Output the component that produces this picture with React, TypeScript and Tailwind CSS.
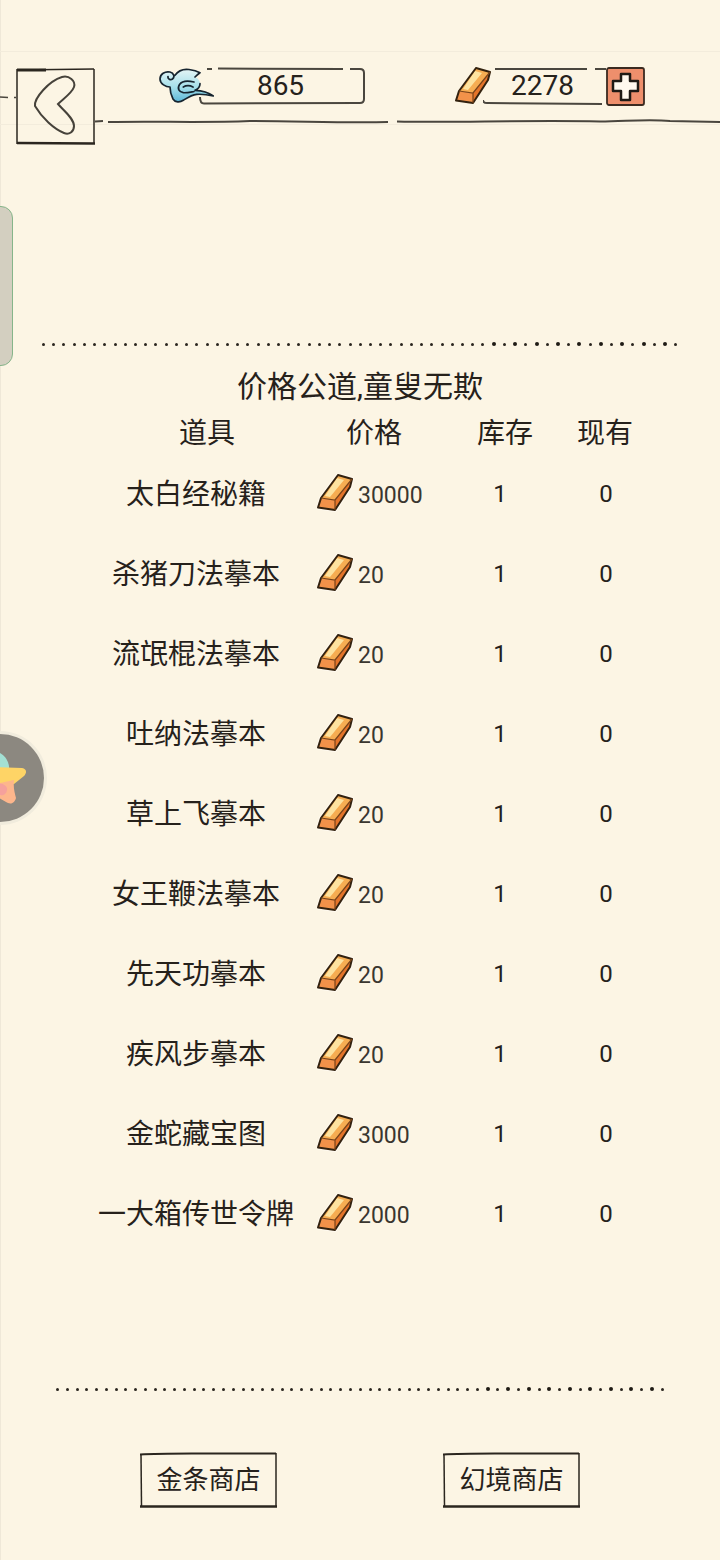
import React from "react";

const items = [
  { name: "太白经秘籍", price: 30000 },
  { name: "杀猪刀法摹本", price: 20 },
  { name: "流氓棍法摹本", price: 20 },
  { name: "吐纳法摹本", price: 20 },
  { name: "草上飞摹本", price: 20 },
  { name: "女王鞭法摹本", price: 20 },
  { name: "先天功摹本", price: 20 },
  { name: "疾风步摹本", price: 20 },
  { name: "金蛇藏宝图", price: 3000 },
  { name: "一大箱传世令牌", price: 2000 },
];

const GoldBar = ({ halo = false }: { halo?: boolean }) => (
  <svg width="38" height="38" viewBox="0 0 38 38" className="shrink-0">
    {halo && (
      <path
        d="M21 1 L35 5 L33 13 L18 36 L1 33.500 L4 24 Z"
        fill="#fffaf0"
        stroke="#fffaf0"
        strokeWidth="4"
        strokeLinejoin="round"
      />
    )}
    <path d="M21 1 L35 5 L18 26 L4 24 Z" fill="#f6ad52" />
    <path d="M20 4 L27 6 L13 23 L8 22 Z" fill="#fde3a0" />
    <path d="M35 5 L33 13 L18 36 L18 26 Z" fill="#e4742a" />
    <path d="M4 24 L18 26 L18 36 L1 33.500 Z" fill="#f2924a" />
    <path
      d="M21 1 L35 5 L33 13 L18 36 L1 33.500 L4 24 Z"
      fill="none"
      stroke="#33220f"
      strokeWidth="2"
      strokeLinejoin="round"
    />
    <path d="M4 24 L18 26 L35 5 M18 26 L18 36" fill="none" stroke="#7a4318" strokeWidth="1.200" />
  </svg>
);

const Cloud = () => (
  <svg width="56" height="36" viewBox="0 0 56 36" className="shrink-0">
    <defs>
      <linearGradient id="cloudFill" x1="0" y1="0" x2="0" y2="1">
        <stop offset="0" stopColor="#e4f5f6" />
        <stop offset="0.55" stopColor="#a5dfea" />
        <stop offset="1" stopColor="#5db8d8" />
      </linearGradient>
    </defs>
    <path
      d="M2 11 C2 6 7 3 12 4 C14 4.500 16 6 17 7.300 C20 3 25 0.700 31 1.500 C35 2 39 3 42 4.700 C40 6 38 8 37 9 C40 10 42 13 42 15.700 C42 19 40 21 37 22.300 C42 22.500 50 24 55.300 28 C49 26.500 44 26 38.700 26.300 C33 27 29 30 25.300 32.300 C22 34.500 17 34.500 15 31 C13 27 12 23 12 19 C8 19 2 16 2 11 Z"
      fill="url(#cloudFill)"
    />
    <path
      d="M12 19 C8 19 2 16 2 11 C2 6 7 3 12 4 C16 5 17 9 14.500 11 C12.500 12.500 9.500 11 10 8.500 M17 7.300 C20 3 25 0.700 31 1.500 C35 2 39 3 42 4.700 C40 6 38 8 37 9 M12 19 C12 24 13 27 15 31 C17 34.500 22 34.500 25.300 32.300 C29 30 33 27 38.700 26.300 C44 26 49 26.500 55.300 28 C50 24 42 22.500 37 22.300 C40 21 42 19 42 15.700"
      fill="none"
      stroke="#16242f"
      strokeWidth="1.700"
      strokeLinecap="round"
      strokeLinejoin="round"
    />
    <path
      d="M36 14 C30 12.500 24 13 21.500 16.500 C19 20.500 21 24 25.300 24.700 C29 25 33 24 36 23.500 M25.300 19 C28 17.500 32 17.500 35 19"
      fill="none"
      stroke="#16242f"
      strokeWidth="1.700"
      strokeLinecap="round"
    />
  </svg>
);

const HandFrame = () => (
  <svg
    className="absolute inset-0 h-full w-full"
    viewBox="0 0 137 56"
    preserveAspectRatio="none"
    fill="none"
    stroke="#2b261f"
  >
    <path d="M0 2.500 C30 0.500 60 2 136 1.500" strokeWidth="2" />
    <path d="M1 2 L1.500 54" strokeWidth="1.500" />
    <path d="M136 1 L136 54" strokeWidth="1.500" />
    <path d="M0 54.500 L137 54.500" strokeWidth="2.500" />
  </svg>
);

// dots get a bit heavier towards the right end, like the drawn line
const Dots = ({ count }: { count: number }) => (
  <div className="flex items-center justify-between">
    {Array.from({ length: count }).map((_, i) => (
      <span
        key={i}
        className={
          i > count * 0.7 && i % 2 === 0
            ? "h-[4px] w-[4px] rounded-full bg-[#1f1b15]"
            : "h-[3px] w-[3px] rounded-full bg-[#2b261f]"
        }
      />
    ))}
  </div>
);

const App = () => {
  return (
    <div className="relative h-[1560px] w-[720px] overflow-hidden bg-[#fcf5e4] font-['Roboto','Noto_Sans_CJK_SC',sans-serif] text-[#26211b]">
      <div className="absolute bottom-0 left-0 top-0 w-px bg-[#efe8d8]" />

      {/* left drawer handle */}
      <div className="absolute left-[-12px] top-[206px] h-[160px] w-[25px] rounded-[12px] border border-[#86b58a] bg-[#d3cfc0]" />

      {/* floating ball */}
      <svg width="50" height="96" viewBox="0 0 50 96" className="absolute left-0 top-[730px]">
        <circle cx="0" cy="48" r="47" fill="#f1ecdd" />
        <circle cx="0" cy="48" r="44" fill="#8c8880" />
        <path d="M-8 42 L0 23 C6 26 10 34 9 40 Z" fill="#a3e0d4" />
        <path d="M-8 37 L22 38 C27 39 27 43 24 46 L14 54 L-8 60 Z" fill="#fed466" />
        <path d="M-4 54 L14 50 C13 58 15 64 16 68 C14 75 9 74 6 72 L-4 66 Z" fill="#fdb68c" />
        <path d="M-4 54 C2 52 8 56 7 60 C6 66 1 66 -4 64 Z" fill="#f5a19c" />
      </svg>

      <div className="h-[51px]" />

      {/* top bar */}
      <header className="relative h-[74px] border-y border-[#f3ecdc]">
        <svg width="720" height="40" viewBox="0 0 720 40" fill="none" stroke="#4a463e" className="absolute left-0 top-[36px]">
          <path d="M0 9 L8 9.500 M14 9.500 L16 9.500" strokeWidth="1.500" />
          <path
            d="M95 33.500 L103 33 M108 34 C160 33 200 35 250 33 C300 33 340 35 388 34 M397 33.500 C450 35 520 32 600 33.500 C630 33 650 31 670 33 L720 34"
            strokeWidth="2"
          />
        </svg>

        <div className="flex items-start pl-[16px] pt-[16px]">
          <button className="relative z-10 h-[77px] w-[79px] shrink-0">
            <svg width="79" height="77" viewBox="0 0 79 77" fill="none" stroke="#2b261f" className="absolute inset-0">
              <path d="M1 2 L78 1" strokeWidth="1.500" />
              <path d="M1 2 L30 2" strokeWidth="3" />
              <path d="M1 1 L1 76" strokeWidth="1.500" />
              <path d="M78 1 L78 75" strokeWidth="1.500" />
              <path d="M1 75 L79 75.500" strokeWidth="2.500" />
              <path
                d="M46 9 C53 7 60 13 58 19 C56 25 47 31 42 36 C47 42 58 50 58 58 C58 64 53 67 48 65 C38 61 26 50 19 38 C18 30 33 13 46 9 Z"
                stroke="#46423a"
                strokeWidth="2"
              />
            </svg>
          </button>

          <div className="relative ml-[63px] mt-[-1px] flex h-[38px] w-[207px] shrink-0 items-center">
            <div className="absolute left-[40px] top-0 flex h-[38px] w-[167px] items-center justify-center pr-[2px] text-[28px] leading-none text-[#26221c]">
              <svg width="167" height="38" viewBox="0 0 167 38" fill="none" stroke="#4a463e" strokeWidth="2" className="absolute inset-0">
                <path d="M9 2 L14 2 M20 1.500 L145 2 M152 2 L162 2 C165 2 166 4 166 6 L166 32 C166 35 165 36 162 36 L6 36.500 C3 36.500 2 34 2 30" />
              </svg>
              865
            </div>
            <div className="relative z-10">
              <Cloud />
            </div>
          </div>

          <div className="ml-[90px] mt-[-1px] flex h-[38px] shrink-0 items-center">
            <div className="relative z-10 -mr-[10px]">
              <GoldBar />
            </div>
            <div className="relative flex h-[38px] w-[123px] items-center justify-center pr-[4px] text-[28px] leading-none text-[#26221c]">
              <svg width="123" height="38" viewBox="0 0 123 38" fill="none" stroke="#4a463e" strokeWidth="2" className="absolute inset-0">
                <path d="M12 2 L104 2 M112 2 L123 2 M0 33 C0 35 2 36 4 36 L119 37" />
              </svg>
              2278
            </div>
            <svg width="39" height="39" viewBox="0 0 39 39" className="shrink-0">
              <rect x="1" y="1" width="37" height="37" rx="2" fill="#ee8f6c" stroke="#3b2a20" strokeWidth="1.800" />
              <path
                d="M15 7 L24 7 L24 14 L32 14 L32 24 L24 24 L24 33 L15 33 L15 24 L7 24 L7 14 L15 14 Z"
                fill="#fff8ee"
                stroke="#1f1a15"
                strokeWidth="2.500"
                strokeLinejoin="round"
              />
            </svg>
          </div>
        </div>
      </header>

      <main className="px-[42px] pt-[217px]">
        <div className="w-[636px]">
          <Dots count={62} />
        </div>

        <h1 className="mt-[19px] h-[44px] w-[636px] text-center text-[30px] font-normal leading-[44px]">
          价格公道,童叟无欺
        </h1>

        <div className="mt-[3px] grid h-[43px] grid-cols-[174px_160px_102px_98px] pl-[78px] text-center text-[28px] leading-[43px]">
          <span>道具</span>
          <span>价格</span>
          <span>库存</span>
          <span>现有</span>
        </div>

        <div className="flex flex-col">
          {items.map((item) => (
            <div key={item.name} className="flex h-[80px] items-center pl-[34px]">
              <span className="w-[240px] whitespace-nowrap text-center text-[28px] leading-none">
                {item.name}
              </span>
              <div className="ml-[1px] flex w-[123px] shrink-0 items-center gap-[3px]">
                <div className="mb-[5px]">
                  <GoldBar halo />
                </div>
                <span className="text-[23px] leading-none text-[#3a362f]">{item.price}</span>
              </div>
              <span className="mb-[2px] w-[120px] text-center text-[24px] leading-none">1</span>
              <span className="mb-[2px] w-[92px] text-center text-[24px] leading-none">0</span>
            </div>
          ))}
        </div>
      </main>

      <div className="absolute left-[56px] top-[1387px] w-[608px]">
        <Dots count={62} />
      </div>

      <footer className="absolute left-[140px] top-[1452px] flex gap-[166px]">
        <button className="relative h-[56px] w-[137px] text-[26px] leading-none">
          <HandFrame />
          金条商店
        </button>
        <button className="relative h-[56px] w-[137px] text-[26px] leading-none">
          <HandFrame />
          幻境商店
        </button>
      </footer>
    </div>
  );
};

export default App;
